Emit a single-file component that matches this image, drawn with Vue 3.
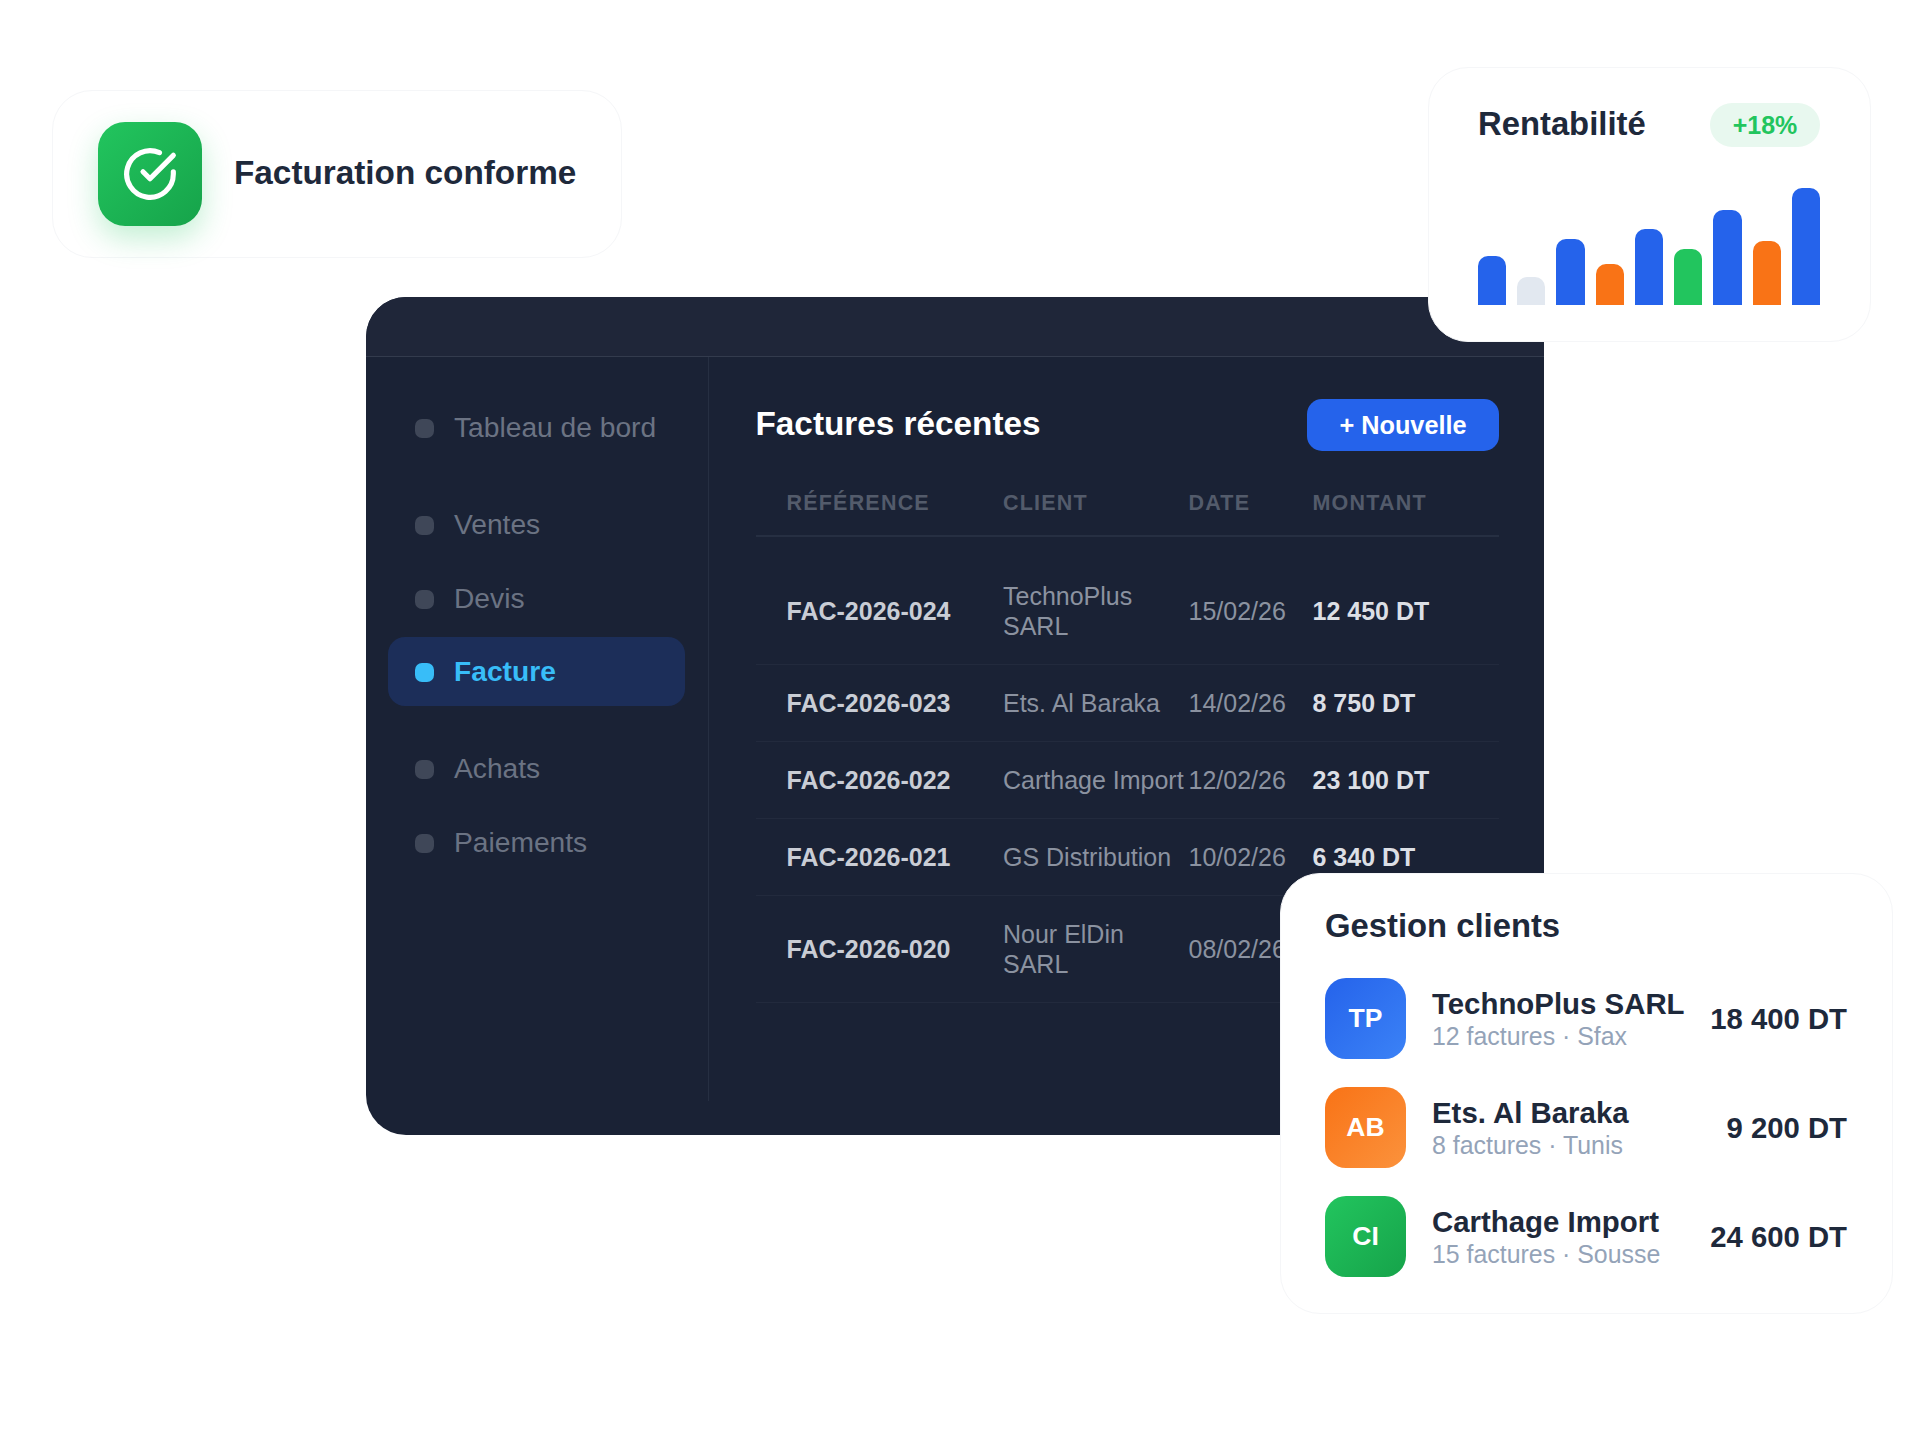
<template>
  <div class="stage">
    <!-- main dark window -->
    <section class="window">
      <div class="window-bar"></div>
      <div class="window-body">
        <aside class="sidebar">
          <div v-for="(group, g) in navGroups" :key="g" class="nav-group">
            <div
              v-for="item in group"
              :key="item"
              class="nav-item"
              :class="{ active: item === 'Facture' }"
            >
              <span class="nav-dot"></span>
              <span>{{ item }}</span>
            </div>
          </div>
        </aside>

        <main class="content">
          <div class="content-head">
            <h2 class="content-title">Factures récentes</h2>
            <button class="new-btn">+ Nouvelle</button>
          </div>

          <div class="table-head table-grid">
            <span>RÉFÉRENCE</span>
            <span>CLIENT</span>
            <span>DATE</span>
            <span>MONTANT</span>
          </div>
          <div v-for="row in invoices" :key="row.ref" class="table-row table-grid">
            <span class="cell-ref">{{ row.ref }}</span>
            <span class="cell-muted">{{ row.client }}</span>
            <span class="cell-muted">{{ row.date }}</span>
            <span v-if="row.amount" class="cell-amount">{{ row.amount }}</span>
          </div>
        </main>
      </div>
    </section>

    <!-- floating cards -->
    <div class="float-card compliance">
      <div class="compliance-icon">
        <svg viewBox="0 0 24 24" width="56" height="56" fill="none" stroke="#fff" stroke-width="2.2" stroke-linecap="round" stroke-linejoin="round">
          <path d="M22 11.08V12a10 10 0 1 1-5.93-9.14" />
          <polyline points="22 4 12 14.01 9 11.01" />
        </svg>
      </div>
      <span class="compliance-text">Facturation conforme</span>
    </div>

    <div class="float-card profit">
      <div class="profit-head">
        <span class="profit-title">Rentabilité</span>
        <span class="profit-badge">+18%</span>
      </div>
      <div class="bars">
        <div
          v-for="(bar, i) in bars"
          :key="i"
          class="bar"
          :style="{ height: bar.h + 'px', background: bar.c }"
        ></div>
      </div>
    </div>

    <div class="float-card clients">
      <h3 class="clients-title">Gestion clients</h3>
      <div class="client-list">
        <div v-for="c in clients" :key="c.initials" class="client">
          <div class="avatar" :class="c.tone">{{ c.initials }}</div>
          <div class="client-info">
            <div class="client-name">{{ c.name }}</div>
            <div class="client-sub">{{ c.sub }}</div>
          </div>
          <div class="client-total">{{ c.total }}</div>
        </div>
      </div>
    </div>
  </div>
</template>

<script setup>
  const navGroups = [
    ['Tableau de bord'],
    ['Ventes', 'Devis', 'Facture'],
    ['Achats', 'Paiements']
  ];

  // last amount sits behind the clients card, nothing to show
  const invoices = [
    { ref: 'FAC-2026-024', client: 'TechnoPlus SARL', date: '15/02/26', amount: '12 450 DT' },
    { ref: 'FAC-2026-023', client: 'Ets. Al Baraka', date: '14/02/26', amount: '8 750 DT' },
    { ref: 'FAC-2026-022', client: 'Carthage Import', date: '12/02/26', amount: '23 100 DT' },
    { ref: 'FAC-2026-021', client: 'GS Distribution', date: '10/02/26', amount: '6 340 DT' },
    { ref: 'FAC-2026-020', client: 'Nour ElDin SARL', date: '08/02/26', amount: '' }
  ];

  const blue = '#2563eb';
  const orange = '#f97316';
  const bars = [
    { h: 49, c: blue },
    { h: 28, c: '#e2e8f0' },
    { h: 66, c: blue },
    { h: 41, c: orange },
    { h: 76, c: blue },
    { h: 56, c: '#22c55e' },
    { h: 95, c: blue },
    { h: 64, c: orange },
    { h: 117, c: blue }
  ];

  const clients = [
    { initials: 'TP', tone: 'tone-blue', name: 'TechnoPlus SARL', sub: '12 factures · Sfax', total: '18 400 DT' },
    { initials: 'AB', tone: 'tone-orange', name: 'Ets. Al Baraka', sub: '8 factures · Tunis', total: '9 200 DT' },
    { initials: 'CI', tone: 'tone-green', name: 'Carthage Import', sub: '15 factures · Sousse', total: '24 600 DT' }
  ];
</script>

<style>
  html, body {
    margin: 0;
    background: #ffffff;
  }
</style>

<style scoped>
  .stage {
    position: relative;
    width: 1920px;
    height: 1440px;
    padding: 297px 0 0 366px;
    box-sizing: border-box;
    overflow: hidden;
    background: #ffffff;
    font-family: "Liberation Sans", Arial, sans-serif;
  }

  /* --- Window --- */
  .window {
    width: 1178px;
    height: 838px;
    border-radius: 40px;
    overflow: hidden;
    background: #1a2235;
    display: flex;
    flex-direction: column;
  }

  .window-bar {
    height: 59px;
    flex-shrink: 0;
    background: #1f2639;
    border-bottom: 1px solid #333b4d;
  }

  .window-body {
    display: flex;
    height: 744px;
  }

  .sidebar {
    width: 343px;
    flex-shrink: 0;
    box-sizing: border-box;
    padding: 36px 23px 0 22px;
    border-right: 1px solid #262f42;
    display: flex;
    flex-direction: column;
    gap: 28px;
  }

  .nav-group {
    display: flex;
    flex-direction: column;
    gap: 4.5px;
  }

  .nav-item {
    height: 69px;
    display: flex;
    align-items: center;
    gap: 20px;
    padding-left: 27px;
    border-radius: 17px;
    font-size: 28.2px;
    color: #6b7383;
  }

  .nav-dot {
    width: 19px;
    height: 19px;
    margin-top: 2px;
    border-radius: 7px;
    background: #3f4758;
  }

  .nav-item.active {
    background: #1c2e59;
    color: #38bdf8;
    font-weight: 700;
  }

  .nav-item.active .nav-dot {
    background: #38bdf8;
  }

  /* --- Table --- */
  .content {
    flex: 1;
    padding: 42px 45px 0 46.5px;
    min-width: 0;
  }

  .content-head {
    display: flex;
    align-items: center;
    justify-content: space-between;
    height: 52px;
  }

  .content-title {
    margin: 0 0 2px;
    font-size: 33.3px;
    font-weight: 700;
    color: #ffffff;
  }

  .new-btn {
    width: 192px;
    height: 52px;
    border: none;
    border-radius: 15px;
    background: #2563eb;
    color: #ffffff;
    font-family: inherit;
    font-size: 25.3px;
    font-weight: 700;
  }

  .table-grid {
    display: grid;
    grid-template-columns: 216.5px 185.5px 124px 1fr;
    padding-left: 31px;
    box-sizing: border-box;
    align-items: center;
  }

  .table-head {
    margin-top: 18px;
    height: 68px;
    padding-top: 3px;
    border-bottom: 2px solid #262f42;
    font-size: 21.5px;
    font-weight: 700;
    letter-spacing: 1.2px;
    color: #535b6b;
  }

  .table-row {
    padding-top: 23px;
    padding-bottom: 23px;
    border-bottom: 1px solid #222a3d;
    font-size: 25px;
    line-height: 30px;
  }

  .table-head + .table-row {
    margin-top: 21px;
  }

  .cell-ref {
    font-weight: 700;
    color: #c9cdd5;
  }

  .cell-muted {
    color: #8b92a0;
  }

  .cell-amount {
    font-weight: 700;
    color: #dcdfe5;
  }

  /* --- Floating cards --- */
  .float-card {
    position: absolute;
    box-sizing: border-box;
    background: #ffffff;
    border: 1px solid #f5f6f8;
    border-radius: 40px;
    color: #1e293b;
  }

  .compliance {
    left: 52px;
    top: 90px;
    width: 570px;
    height: 168px;
    padding: 0 45px;
    display: flex;
    align-items: center;
    gap: 32px;
  }

  .compliance-icon {
    width: 104px;
    height: 104px;
    flex-shrink: 0;
    border-radius: 27px;
    background: linear-gradient(135deg, #22c55e, #16a34a);
    box-shadow: 0 12px 30px rgba(34, 197, 94, 0.28);
    display: flex;
    align-items: center;
    justify-content: center;
  }

  .compliance-text {
    margin-bottom: 2px;
    font-size: 33.3px;
    font-weight: 700;
    white-space: nowrap;
  }

  .profit {
    left: 1428px;
    top: 67px;
    width: 443px;
    height: 275px;
    padding: 35px 50px 0 49px;
  }

  .profit-head {
    display: flex;
    align-items: center;
    justify-content: space-between;
    height: 44px;
  }

  .profit-title {
    margin-bottom: 2px;
    font-size: 32.8px;
    font-weight: 700;
  }

  .profit-badge {
    width: 110px;
    height: 44px;
    border-radius: 22px;
    background: #e8f8ef;
    color: #22c55e;
    font-size: 25px;
    font-weight: 700;
    display: flex;
    align-items: center;
    justify-content: center;
  }

  .bars {
    margin-top: 41px;
    height: 117px;
    display: flex;
    align-items: flex-end;
    gap: 11px;
  }

  .bar {
    flex: 1;
    border-radius: 10px 10px 0 0;
  }

  .clients {
    left: 1280px;
    top: 873px;
    width: 613px;
    height: 441px;
    padding: 33px 45px 0 44px;
  }

  .clients-title {
    margin: 0 0 33px;
    font-size: 32.8px;
    line-height: 38px;
    font-weight: 700;
  }

  .client-list {
    display: flex;
    flex-direction: column;
    gap: 28px;
  }

  .client {
    display: flex;
    align-items: center;
    gap: 26px;
  }

  .avatar {
    width: 81px;
    height: 81px;
    flex-shrink: 0;
    border-radius: 21px;
    color: #ffffff;
    font-size: 26.5px;
    font-weight: 700;
    display: flex;
    align-items: center;
    justify-content: center;
  }

  .tone-blue { background: linear-gradient(135deg, #2563eb, #3b82f6); }
  .tone-orange { background: linear-gradient(135deg, #f97316, #fb923c); }
  .tone-green { background: linear-gradient(135deg, #22c55e, #16a34a); }

  .client-info {
    flex: 1;
    min-width: 0;
    padding-top: 2px;
    white-space: nowrap;
  }

  .client-name {
    font-size: 29.4px;
    line-height: 33px;
    font-weight: 700;
  }

  .client-sub {
    font-size: 24.9px;
    line-height: 32px;
    color: #94a3b8;
  }

  .client-total {
    font-size: 29.3px;
    font-weight: 700;
    white-space: nowrap;
  }
</style>
